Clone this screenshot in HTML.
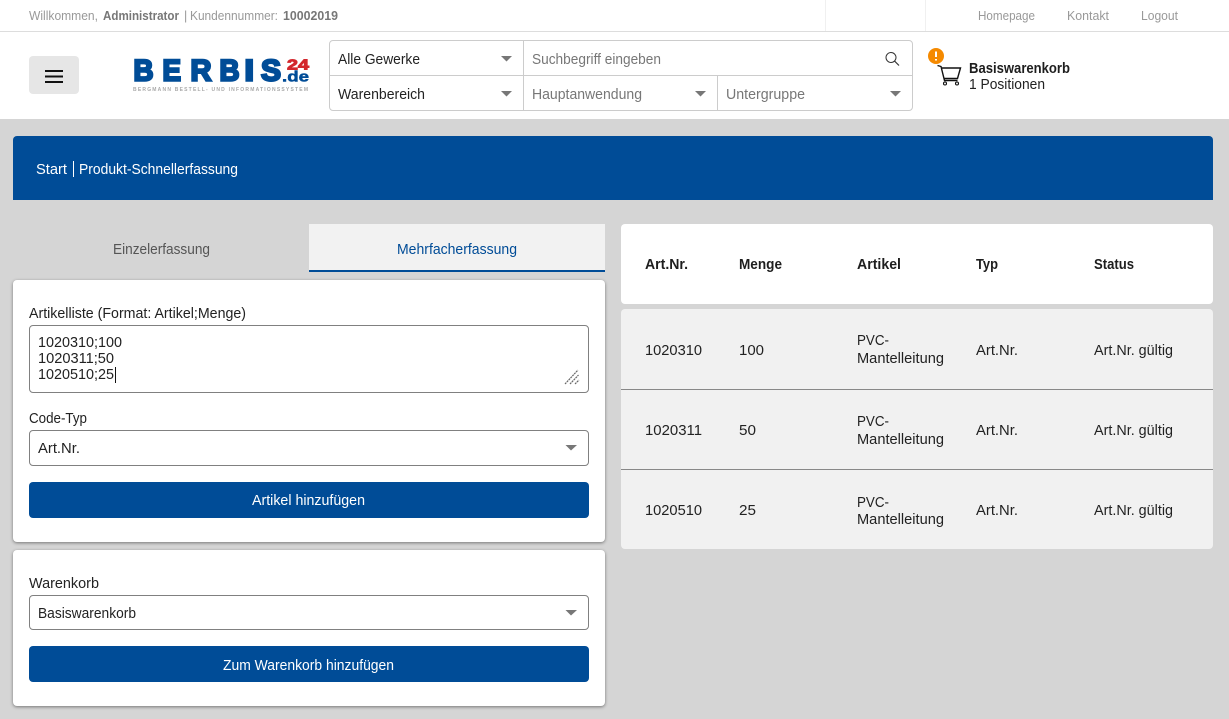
<!DOCTYPE html>
<html lang="de">
<head>
<meta charset="utf-8">
<title>Produkt-Schnellerfassung</title>
<style>
html,body{margin:0;padding:0;width:1229px;height:719px;overflow:hidden;background:#d5d5d5;font-family:"Liberation Sans",sans-serif}
.b{position:absolute;box-sizing:border-box}
svg{position:absolute;left:0;top:0}
svg text{font-family:"Liberation Sans",sans-serif;font-size:14.5px;fill:#222;white-space:pre}
svg text.s12{font-size:12.5px;fill:#999}
svg text.s12b{font-size:12.5px;fill:#777;font-weight:700}
svg text.g{fill:#777}
svg text.bd{font-weight:700;fill:#1e1e1e}
svg text.w{fill:#fff}
svg text.l{font-weight:700;fill:#004c97;font-size:30px;stroke:#004c97;stroke-width:2.400;stroke-linejoin:miter}
</style>
</head>
<body>
<div class="b" style="left:0;top:0;width:1229px;height:119px;background:#fff"></div>
<div class="b" style="left:0;top:31px;width:1229px;height:1px;background:#ddd"></div>
<div class="b" style="left:825px;top:0;width:1px;height:31px;background:#f0f0f0"></div>
<div class="b" style="left:925px;top:0;width:1px;height:31px;background:#f0f0f0"></div>
<div class="b" style="left:29px;top:56px;width:50px;height:38px;background:#e6e6e6;border-radius:4px"></div>
<div class="b" style="left:329px;top:40px;width:584px;height:71px;border:1px solid #ccc;border-radius:4px"></div>
<div class="b" style="left:329px;top:75px;width:584px;height:1px;background:#ccc"></div>
<div class="b" style="left:523px;top:40px;width:1px;height:71px;background:#ccc"></div>
<div class="b" style="left:717px;top:75px;width:1px;height:36px;background:#ccc"></div>
<div class="b" style="left:13px;top:136px;width:1200px;height:64px;background:#004c97;border-radius:4px 4px 0 0"></div>
<div class="b" style="left:309px;top:224px;width:296px;height:48px;background:#f2f2f2;border-bottom:2px solid #004c97"></div>
<div class="b" style="left:13px;top:280px;width:592px;height:262px;background:#fff;border-radius:4px;box-shadow:0 1px 3px rgba(0,0,0,.45)"></div>
<div class="b" style="left:13px;top:550px;width:592px;height:156px;background:#fff;border-radius:4px;box-shadow:0 1px 3px rgba(0,0,0,.45)"></div>
<div class="b" style="left:29px;top:325px;width:560px;height:68px;border:1px solid #808080;border-radius:4px"></div>
<div class="b" style="left:29px;top:430px;width:560px;height:36px;border:1px solid #808080;border-radius:4px"></div>
<div class="b" style="left:29px;top:482px;width:560px;height:36px;background:#004c97;border-radius:4px"></div>
<div class="b" style="left:29px;top:595px;width:560px;height:35px;border:1px solid #808080;border-radius:4px"></div>
<div class="b" style="left:29px;top:646px;width:560px;height:36px;background:#004c97;border-radius:4px"></div>
<div class="b" style="left:621px;top:224px;width:592px;height:80px;background:#fff;border-radius:4px"></div>
<div class="b" style="left:621px;top:309px;width:592px;height:240px;background:#f1f1f1;border-radius:4px"></div>
<div class="b" style="left:621px;top:389px;width:592px;height:1px;background:#888"></div>
<div class="b" style="left:621px;top:469px;width:592px;height:1px;background:#888"></div>

<svg width="1229" height="719" viewBox="0 0 1229 719" xmlns="http://www.w3.org/2000/svg">
<!-- top bar -->
<text class="s12" x="29" y="20" textLength="69" lengthAdjust="spacingAndGlyphs">Willkommen,</text>
<text class="s12b" x="103" y="20" textLength="76" lengthAdjust="spacingAndGlyphs">Administrator</text>
<text class="s12" x="184" y="20">|</text>
<text class="s12" x="190" y="20" textLength="88" lengthAdjust="spacingAndGlyphs">Kundennummer:</text>
<text class="s12b" x="283" y="20" textLength="55" lengthAdjust="spacingAndGlyphs">10002019</text>
<text class="s12" x="978" y="20" textLength="57" lengthAdjust="spacingAndGlyphs">Homepage</text>
<text class="s12" x="1067" y="20" textLength="42" lengthAdjust="spacingAndGlyphs">Kontakt</text>
<text class="s12" x="1141" y="20" textLength="37" lengthAdjust="spacingAndGlyphs">Logout</text>

<!-- hamburger -->
<path d="M45 71H63M45 76.500H63M45 82H63" stroke="#111" stroke-width="2" fill="none"/>

<!-- logo -->
<text class="l" x="133.500" y="80.500" textLength="20" lengthAdjust="spacingAndGlyphs">B</text>
<text class="l" x="162.500" y="80.500" textLength="18.500" lengthAdjust="spacingAndGlyphs">E</text>
<text class="l" x="190.500" y="80.500" textLength="21" lengthAdjust="spacingAndGlyphs">R</text>
<text class="l" x="219.500" y="80.500" textLength="20" lengthAdjust="spacingAndGlyphs">B</text>
<text class="l" x="244.500" y="80.500" textLength="9.500" lengthAdjust="spacingAndGlyphs">I</text>
<text class="l" x="261" y="80.500" textLength="20" lengthAdjust="spacingAndGlyphs">S</text>
<text x="287" y="69.500" textLength="22" lengthAdjust="spacingAndGlyphs" style="font-size:15px;font-weight:700;fill:#d3262c;stroke:#d3262c;stroke-width:.9">24</text>
<text x="282" y="81.500" textLength="27" lengthAdjust="spacingAndGlyphs" style="font-size:15px;font-weight:700;fill:#004c97;stroke:#004c97;stroke-width:.5">.de</text>
<text x="133" y="91" textLength="175" style="font-size:5px;font-weight:700;fill:#aaa">BERGMANN BESTELL- UND INFORMATIONSSYSTEM</text>

<!-- search -->
<text x="338" y="64" textLength="82" lengthAdjust="spacingAndGlyphs">Alle Gewerke</text>
<text x="338" y="99" textLength="87" lengthAdjust="spacingAndGlyphs">Warenbereich</text>
<text class="g" x="532" y="64" textLength="129" lengthAdjust="spacingAndGlyphs">Suchbegriff eingeben</text>
<text class="g" x="532" y="99" textLength="110" lengthAdjust="spacingAndGlyphs">Hauptanwendung</text>
<text class="g" x="726" y="99" textLength="79" lengthAdjust="spacingAndGlyphs">Untergruppe</text>
<g fill="#777">
<path d="M501 56H512L506.500 61.500Z"/>
<path d="M501 91H512L506.500 96.500Z"/>
<path d="M695 91H706L700.500 96.500Z"/>
<path d="M890 91H901L895.500 96.500Z"/>
<path d="M565.500 445H577L571 450.500Z"/>
<path d="M565.500 610H577L571 615.500Z"/>
</g>
<circle cx="891" cy="57.500" r="5" fill="none" stroke="#333" stroke-width="1"/>
<path d="M894.500 61L899 65.500" stroke="#333" stroke-width="1.200" fill="none"/>

<!-- cart -->
<path d="M937.500 65.500L941 66.500L944.500 80.500H957.500M942 68H960.500L957.500 78.500H944" fill="none" stroke="#111" stroke-width="1.400"/>
<circle cx="945" cy="83.500" r="1.500" fill="none" stroke="#111" stroke-width="1.100"/>
<circle cx="957" cy="83.500" r="1.500" fill="none" stroke="#111" stroke-width="1.100"/>
<circle cx="936" cy="56" r="8" fill="#f58a00"/>
<path d="M936 51.500V57M936 59V60.500" stroke="#fff" stroke-width="2" fill="none"/>
<text class="bd" x="969" y="73" textLength="101" lengthAdjust="spacingAndGlyphs">Basiswarenkorb</text>
<text x="969" y="89" textLength="76" lengthAdjust="spacingAndGlyphs">1 Positionen</text>

<!-- breadcrumb -->
<text class="w" x="36" y="174" textLength="31" lengthAdjust="spacingAndGlyphs">Start</text>
<rect x="73" y="161" width="1" height="16" fill="#fff"/>
<text class="w" x="79" y="174" textLength="159" lengthAdjust="spacingAndGlyphs">Produkt-Schnellerfassung</text>

<!-- tabs -->
<text x="113" y="254" textLength="97" lengthAdjust="spacingAndGlyphs" style="fill:#555">Einzelerfassung</text>
<text x="397" y="254" textLength="120" lengthAdjust="spacingAndGlyphs" style="fill:#004c97">Mehrfacherfassung</text>

<!-- form -->
<text x="29" y="318" textLength="217" lengthAdjust="spacingAndGlyphs">Artikelliste (Format: Artikel;Menge)</text>
<text x="38" y="347" textLength="84" lengthAdjust="spacingAndGlyphs">1020310;100</text>
<text x="38" y="363" textLength="76" lengthAdjust="spacingAndGlyphs">1020311;50</text>
<text x="38" y="379" textLength="76" lengthAdjust="spacingAndGlyphs">1020510;25</text>
<rect x="115" y="367" width="1" height="16" fill="#111"/>
<path d="M565 384L578 370M570 384L578.500 375M575 384L579 380" stroke="#666" stroke-width="1.200" stroke-dasharray="2 .7" fill="none"/>
<text x="29" y="423" textLength="58" lengthAdjust="spacingAndGlyphs">Code-Typ</text>
<text x="38" y="453" textLength="42" lengthAdjust="spacingAndGlyphs">Art.Nr.</text>
<text class="w" x="252" y="505" textLength="113" lengthAdjust="spacingAndGlyphs">Artikel hinzufügen</text>
<text x="29" y="588" textLength="70" lengthAdjust="spacingAndGlyphs">Warenkorb</text>
<text x="38" y="618" textLength="98" lengthAdjust="spacingAndGlyphs">Basiswarenkorb</text>
<text class="w" x="223" y="670" textLength="171" lengthAdjust="spacingAndGlyphs">Zum Warenkorb hinzufügen</text>

<!-- table head -->
<text class="bd" x="645" y="269" textLength="43" lengthAdjust="spacingAndGlyphs">Art.Nr.</text>
<text class="bd" x="739" y="269" textLength="43" lengthAdjust="spacingAndGlyphs">Menge</text>
<text class="bd" x="857" y="269" textLength="44" lengthAdjust="spacingAndGlyphs">Artikel</text>
<text class="bd" x="976" y="269" textLength="22" lengthAdjust="spacingAndGlyphs">Typ</text>
<text class="bd" x="1094" y="269" textLength="40" lengthAdjust="spacingAndGlyphs">Status</text>

<!-- rows -->
<text x="645" y="355" textLength="57" lengthAdjust="spacingAndGlyphs">1020310</text>
<text x="739" y="355" textLength="25" lengthAdjust="spacingAndGlyphs">100</text>
<text x="857" y="345" textLength="32" lengthAdjust="spacingAndGlyphs">PVC-</text>
<text x="857" y="363" textLength="87" lengthAdjust="spacingAndGlyphs">Mantelleitung</text>
<text x="976" y="355" textLength="42" lengthAdjust="spacingAndGlyphs">Art.Nr.</text>
<text x="1094" y="355" textLength="79" lengthAdjust="spacingAndGlyphs">Art.Nr. gültig</text>

<text x="645" y="435" textLength="57" lengthAdjust="spacingAndGlyphs">1020311</text>
<text x="739" y="435" textLength="17" lengthAdjust="spacingAndGlyphs">50</text>
<text x="857" y="426" textLength="32" lengthAdjust="spacingAndGlyphs">PVC-</text>
<text x="857" y="444" textLength="87" lengthAdjust="spacingAndGlyphs">Mantelleitung</text>
<text x="976" y="435" textLength="42" lengthAdjust="spacingAndGlyphs">Art.Nr.</text>
<text x="1094" y="435" textLength="79" lengthAdjust="spacingAndGlyphs">Art.Nr. gültig</text>

<text x="645" y="515" textLength="57" lengthAdjust="spacingAndGlyphs">1020510</text>
<text x="739" y="515" textLength="17" lengthAdjust="spacingAndGlyphs">25</text>
<text x="857" y="507" textLength="32" lengthAdjust="spacingAndGlyphs">PVC-</text>
<text x="857" y="524" textLength="87" lengthAdjust="spacingAndGlyphs">Mantelleitung</text>
<text x="976" y="515" textLength="42" lengthAdjust="spacingAndGlyphs">Art.Nr.</text>
<text x="1094" y="515" textLength="79" lengthAdjust="spacingAndGlyphs">Art.Nr. gültig</text>
</svg>
</body>
</html>
